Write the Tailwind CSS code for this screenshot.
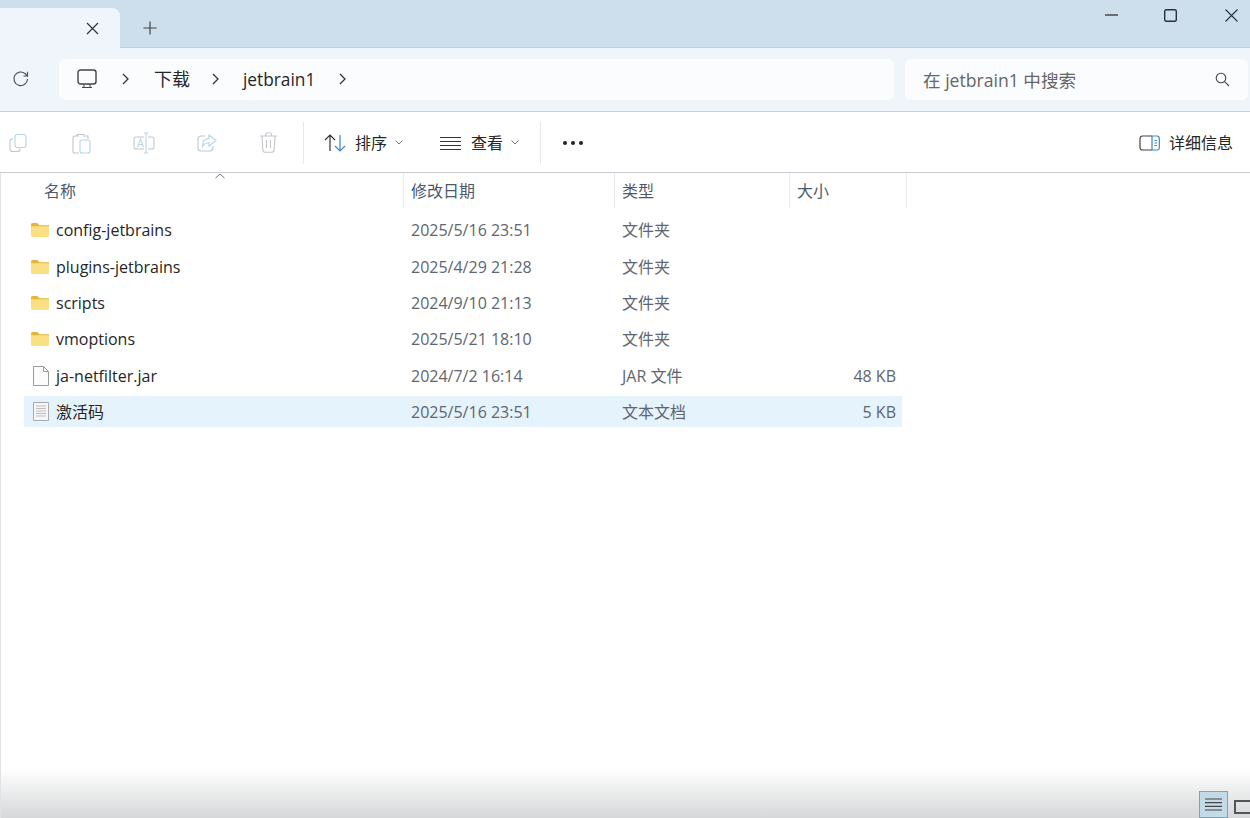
<!DOCTYPE html>
<html lang="zh-CN">
<head>
    <meta charset="UTF-8">
    <title>jetbrain1</title>
    <script src="https://cdn.jsdelivr.net/npm/@tailwindcss/browser@4"></script>
</head>
<body class="h-[818px] w-[1250px] overflow-hidden bg-white font-['Open_Sans','Noto_Sans_CJK_SC',sans-serif] text-[#262626]">

<!-- tabs -->
<div class="flex h-[48px] bg-[#cddeec] border-b border-[#bcd0e0]">
    <div class="mt-[8px] flex h-[40px] w-[120px] items-center justify-end rounded-tr-lg bg-[#eff5fa] pr-[21px]">
        <svg width="13" height="13" viewBox="0 0 13 13" fill="none" stroke="#333" stroke-width="1.2"><path d="M1 1l11 11M12 1L1 12"/></svg>
    </div>
    <div class="ml-[23px] mt-[21px]">
        <svg width="14" height="14" viewBox="0 0 14 14" fill="none" stroke="#444" stroke-width="1.2"><path d="M7 0.5v13M0.5 7h13"/></svg>
    </div>
    <div class="ml-auto flex h-[30px] items-center">
        <svg class="mr-[46px]" width="13" height="2" viewBox="0 0 13 2"><path d="M0 1h13" stroke="#333" stroke-width="1.3"/></svg>
        <svg class="mr-[48px]" width="13" height="13" viewBox="0 0 13 13" fill="none" stroke="#2b2f38" stroke-width="1.4"><rect x="0.7" y="0.7" width="11.6" height="11.6" rx="1.5"/></svg>
        <svg class="mr-[12px]" width="13" height="13" viewBox="0 0 13 13" fill="none" stroke="#333" stroke-width="1.2"><path d="M0.5 0.5l12 12M12.5 0.5l-12 12"/></svg>
    </div>
</div>

<!-- address bar -->
<div class="flex h-[64px] items-center border-b border-[#c3cfdc] bg-[#eff5fa] pb-[1px]">
    <div class="flex w-[59px] justify-center pr-[18px]">
        <svg width="18" height="18" viewBox="0 0 18 18" fill="none" stroke="#555" stroke-width="1.2"><path d="M15.5 9a6.8 6.8 0 1 1-2.2-5.2L15.5 6V1.8M15.5 6h-4"/></svg>
    </div>
    <div class="flex h-[41px] w-[835px] items-center rounded-md bg-[#fafcfe] text-[18px]">
        <svg class="ml-[18px]" width="20" height="20" viewBox="0 0 20 20" fill="none" stroke="#444" stroke-width="1.4"><rect x="1" y="1" width="18" height="14" rx="2.5"/><path d="M7 15v3M13 15v3M5 18.5h10" stroke-width="1"/></svg>
        <svg class="ml-[25px]" width="8" height="12" viewBox="0 0 8 12" fill="none" stroke="#333" stroke-width="1.3"><path d="M1 1l5 5-5 5"/></svg>
        <span class="ml-[24px] mt-[1px]">下载</span>
        <svg class="ml-[22px]" width="8" height="12" viewBox="0 0 8 12" fill="none" stroke="#333" stroke-width="1.3"><path d="M1 1l5 5-5 5"/></svg>
        <span class="ml-[23px] mt-[1px] text-[17.300px]">jetbrain1</span>
        <svg class="ml-[24px]" width="8" height="12" viewBox="0 0 8 12" fill="none" stroke="#333" stroke-width="1.3"><path d="M1 1l5 5-5 5"/></svg>
    </div>
    <div class="ml-[11px] flex h-[41px] w-[343px] items-center justify-between rounded-md bg-[#fafcfe] pl-[18px] pr-[18px] text-[17.600px] text-[#666]">
        <span class="mt-[2px]">在 jetbrain1 中搜索</span>
        <svg width="15" height="15" viewBox="0 0 15 15" fill="none" stroke="#444" stroke-width="1.1"><circle cx="6" cy="6" r="4.8"/><path d="M9.6 9.6l4.4 4.4"/></svg>
    </div>
</div>

<!-- toolbar -->
<div class="flex h-[61px] items-center border-b border-[#c9ccd3] pt-[1px] text-[16px]">
    <div class="flex h-[42px] w-[304px] items-center border-r border-[#e8e8e8]">
        <svg class="ml-[9px]" width="20" height="20" viewBox="0 0 20 20" fill="none" stroke-width="1.1"><path d="M4 6H3a2 2 0 0 0-2 2v8a2.5 2.5 0 0 0 2.5 2.5H9a2 2 0 0 0 2-2v-1" stroke="#c3c6cb"/><rect x="6" y="1.5" width="11" height="13" rx="2.5" stroke="#b5d5ea"/></svg>
        <svg class="ml-[43px]" width="20" height="22" viewBox="0 0 20 22" fill="none" stroke-width="1.1"><path d="M7 4H3a2 2 0 0 0-2 2v13a2 2 0 0 0 2 2h4M13 4h3v3M5 4V2.5h7V5" stroke="#c3c6cb"/><rect x="8" y="8" width="10" height="13" rx="2" stroke="#b5d5ea"/></svg>
        <svg class="ml-[41px]" width="22" height="22" viewBox="0 0 22 22" fill="none" stroke-width="1.1"><path d="M11 5H3a2 2 0 0 0-2 2v8a2 2 0 0 0 2 2h8M15 5h4a2 2 0 0 1 2 2v8a2 2 0 0 1-2 2h-4" stroke="#c3c6cb"/><path d="M4.5 15l3-8 3 8M5.5 12.5h4" stroke="#b5d5ea"/><path d="M11 1h4M13 1v20M11 21h4" stroke="#b5d5ea"/></svg>
        <svg class="ml-[42px]" width="20" height="20" viewBox="0 0 20 20" fill="none" stroke-width="1.1"><path d="M8 3H4a3 3 0 0 0-3 3v9a3 3 0 0 0 3 3h9a3 3 0 0 0 3-3v-2" stroke="#c3c6cb"/><path d="M12 2l7 5.5-7 5.5V9.8c-3 0-5 1-6.500 3.700C5.500 9 8 5.700 12 5.300z" stroke="#b5d5ea"/></svg>
        <svg class="ml-[42px]" width="19" height="21" viewBox="0 0 19 21" fill="none" stroke="#c3c6cb" stroke-width="1.1"><path d="M1 4h17M6.500 4V2.500A1.500 1.500 0 0 1 8 1h3a1.500 1.500 0 0 1 1.500 1.500V4M3 4l.8 14a2.500 2.500 0 0 0 2.500 2.300h6.400a2.500 2.500 0 0 0 2.500-2.300L16 4M7.500 8v8M11.500 8v8"/></svg>
    </div>
    <svg class="ml-[20px]" width="22" height="18" viewBox="0 0 22 18" fill="none" stroke-width="1.2"><path d="M6 17V1M1 6l5-5 5 5" stroke="#333"/><path d="M16 1v16M11 12l5 5 5-5" stroke="#3a87c4"/></svg>
    <span class="ml-[9px] mt-[1px]">排序</span>
    <svg class="ml-[8px]" width="8" height="5" viewBox="0 0 8 5" fill="none" stroke="#777"><path d="M.5.5L4 4 7.500.5"/></svg>
    <svg class="ml-[37px]" width="21" height="14" viewBox="0 0 21 14" fill="none" stroke="#333" stroke-width="1"><path d="M0 1.500h21M0 5.500h21M0 9.500h21M0 13.500h21"/></svg>
    <span class="ml-[10px] mt-[1px]">查看</span>
    <svg class="ml-[8px]" width="8" height="5" viewBox="0 0 8 5" fill="none" stroke="#777"><path d="M.5.5L4 4 7.500.5"/></svg>
    <div class="ml-[21px] h-[42px] border-l border-[#e8e8e8]"></div>
    <div class="ml-[22px] flex gap-[4px]">
        <span class="size-[4px] rounded-full bg-[#222]"></span>
        <span class="size-[4px] rounded-full bg-[#222]"></span>
        <span class="size-[4px] rounded-full bg-[#222]"></span>
    </div>
    <svg class="ml-auto" width="21" height="16" viewBox="0 0 21 16" fill="none" stroke-width="1.2"><path d="M13 1H3.500A2.500 2.500 0 0 0 1 3.500v9A2.500 2.500 0 0 0 3.500 15H13" stroke="#444"/><path d="M13 1h5a2.300 2.300 0 0 1 2.300 2.300v9.400A2.300 2.300 0 0 1 18 15h-5zM15.500 5.500h2.500M15.500 8h2.500M15.500 10.500h2.500" stroke="#3a87c4"/></svg>
    <span class="ml-[9px] mr-[17px] mt-[1px]">详细信息</span>
</div>

<!-- file list -->
<main class="relative h-[645px] border-l border-[#dfe3e8] text-[16px]">
    <div class="relative flex h-[35px] items-center text-[#4c5a6b]">
        <svg class="absolute left-[214px] top-[0px]" width="10" height="6" viewBox="0 0 10 6" fill="none" stroke="#777"><path d="M.5 5L5 1l4.500 4"/></svg>
        <div class="h-full w-[403px] border-r border-[#e8eaed] pl-[43px] leading-[36px]">名称</div>
        <div class="h-full w-[211px] border-r border-[#e8eaed] pl-[7px] leading-[36px]">修改日期</div>
        <div class="h-full w-[175px] border-r border-[#e8eaed] pl-[7px] leading-[36px]">类型</div>
        <div class="h-full w-[117px] border-r border-[#e8eaed] pl-[7px] leading-[36px]">大小</div>
    </div>

    <div class="ml-[23px] mt-[4px] flex w-[878px] flex-col">
        <div class="flex h-[36.400px] items-center">
            <svg class="ml-[7px]" width="18" height="14" viewBox="0 0 18 14"><path d="M0 1.500A1.500 1.500 0 0 1 1.500 0h4.800l2 2.200H18v3H0z" fill="#e5b53a"/><path d="M0 3.200h18V12.500a1.500 1.500 0 0 1-1.500 1.500h-15A1.500 1.500 0 0 1 0 12.500z" fill="#fbdf83"/></svg>
            <span class="ml-[7px] w-[355px]">config-jetbrains</span>
            <span class="w-[211px] text-[#5f6670]">2025/5/16 23:51</span>
            <span class="text-[#5f6670]">文件夹</span>
        </div>
        <div class="flex h-[36.400px] items-center">
            <svg class="ml-[7px]" width="18" height="14" viewBox="0 0 18 14"><path d="M0 1.500A1.500 1.500 0 0 1 1.500 0h4.800l2 2.200H18v3H0z" fill="#e5b53a"/><path d="M0 3.200h18V12.500a1.500 1.500 0 0 1-1.500 1.500h-15A1.500 1.500 0 0 1 0 12.500z" fill="#fbdf83"/></svg>
            <span class="ml-[7px] w-[355px]">plugins-jetbrains</span>
            <span class="w-[211px] text-[#5f6670]">2025/4/29 21:28</span>
            <span class="text-[#5f6670]">文件夹</span>
        </div>
        <div class="flex h-[36.400px] items-center">
            <svg class="ml-[7px]" width="18" height="14" viewBox="0 0 18 14"><path d="M0 1.500A1.500 1.500 0 0 1 1.500 0h4.800l2 2.200H18v3H0z" fill="#e5b53a"/><path d="M0 3.200h18V12.500a1.500 1.500 0 0 1-1.500 1.500h-15A1.500 1.500 0 0 1 0 12.500z" fill="#fbdf83"/></svg>
            <span class="ml-[7px] w-[355px]">scripts</span>
            <span class="w-[211px] text-[#5f6670]">2024/9/10 21:13</span>
            <span class="text-[#5f6670]">文件夹</span>
        </div>
        <div class="flex h-[36.400px] items-center">
            <svg class="ml-[7px]" width="18" height="14" viewBox="0 0 18 14"><path d="M0 1.500A1.500 1.500 0 0 1 1.500 0h4.800l2 2.200H18v3H0z" fill="#e5b53a"/><path d="M0 3.200h18V12.500a1.500 1.500 0 0 1-1.500 1.500h-15A1.500 1.500 0 0 1 0 12.500z" fill="#fbdf83"/></svg>
            <span class="ml-[7px] w-[355px]">vmoptions</span>
            <span class="w-[211px] text-[#5f6670]">2025/5/21 18:10</span>
            <span class="text-[#5f6670]">文件夹</span>
        </div>
        <div class="flex h-[36.400px] items-center">
            <svg class="ml-[9px]" width="16" height="20" viewBox="0 0 16 20" fill="#fcfcfc" stroke="#9a9a9a"><path d="M.5.500h10l5 5v14H.5z"/><path d="M10.500.500v5h5" fill="none"/></svg>
            <span class="ml-[7px] w-[355px]">ja-netfilter.jar</span>
            <span class="w-[211px] text-[#5f6670]">2024/7/2 16:14</span>
            <span class="w-[200px] text-[#5f6670]">JAR 文件</span>
            <span class="w-[74px] text-right text-[#5f6670]">48 KB</span>
        </div>
        <div class="mt-[2px] flex h-[31px] items-center bg-[#e5f3fc] pt-[1px]">
            <svg class="ml-[9px]" width="16" height="19" viewBox="0 0 16 19" fill="#f6f6f6" stroke="#aaa"><path d="M.5.500h15v18H.5z"/><path d="M3 4h10M3 6.500h10M3 9h10M3 11.500h10M3 14h10" stroke="#bdbdbd"/></svg>
            <span class="ml-[7px] w-[355px]">激活码</span>
            <span class="w-[211px] text-[#5f6670]">2025/5/16 23:51</span>
            <span class="w-[200px] text-[#5f6670]">文本文档</span>
            <span class="w-[74px] text-right text-[#5f6670]">5 KB</span>
        </div>
    </div>

    <!-- blurred bottom edge of the window -->
    <div class="absolute inset-x-0 bottom-0 h-[50px] bg-gradient-to-b from-white to-[#d6d8d9]"></div>
    <div class="absolute bottom-0 right-0 flex items-end">
        <div class="flex h-[27px] w-[29px] items-center justify-center border border-[#7fa3b5] bg-[#c3dbe7]">
            <svg width="17" height="13" viewBox="0 0 17 13" stroke="#444" stroke-width="1.2"><path d="M0 1h17M0 4.700h17M0 8.300h17M0 12h17"/></svg>
        </div>
        <div class="mb-[4px] ml-[6px] h-[14px] w-[16px] border-2 border-r-0 border-[#555]"></div>
    </div>
</main>
</body>
</html>
